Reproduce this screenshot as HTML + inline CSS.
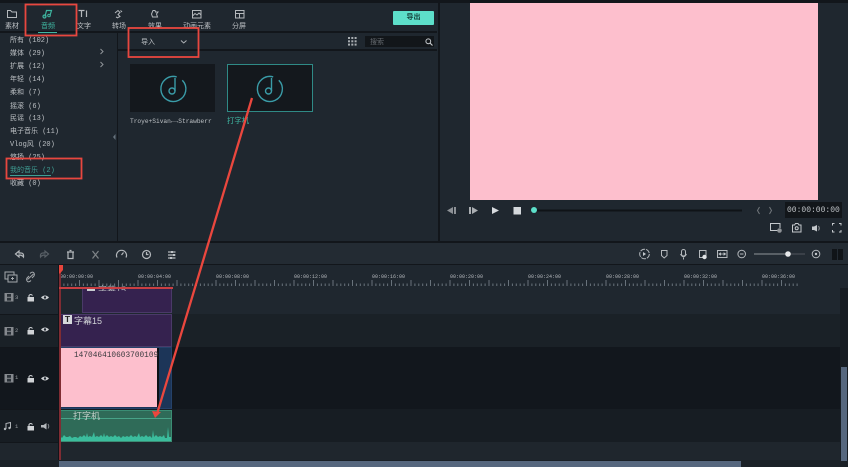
<!DOCTYPE html>
<html><head><meta charset="utf-8"><style>
html,body{margin:0;padding:0;background:#1f272f}
#p{position:relative;width:848px;height:467px;overflow:hidden;background:#1f272f;font-family:"Liberation Mono","Noto Sans CJK SC",monospace;color:#c4c8cc;font-size:7px}
#p div,#p span{position:absolute;white-space:nowrap;line-height:10px}
.b{background:#12161b}
.n{left:10px;font-size:7px;color:#bcc0c4;margin-top:1.500px}
.r{font-family:"Liberation Mono",monospace;font-size:5px;color:#b4b8bc;margin-top:1px}
svg{position:absolute;overflow:visible}
.i{fill:none;stroke:#b4b8bc;stroke-width:1}
.h{top:21px;color:#bcc0c4;font-size:7px;margin-top:1px}
</style></head><body><div id="p">

<!-- structural -->
<div class="b" style="left:0;top:0;width:848px;height:3px"></div>
<div class="b" style="left:0;top:31px;width:437px;height:2px"></div>
<div class="b" style="left:118px;top:49px;width:319px;height:2px"></div>
<div class="b" style="left:117px;top:33px;width:1px;height:208px"></div>
<div class="b" style="left:438px;top:0;width:2px;height:241px"></div>
<div class="b" style="left:0;top:241px;width:848px;height:2px"></div>
<div style="left:470px;top:3px;width:348px;height:197px;background:#fdbfcd"></div>

<!-- top tabs -->
<svg style="left:0;top:0" width="260" height="32" viewBox="0 0 260 32">
<path class="i" d="M7.500 10.500V17.500H16.500V12H12L10.500 10.500Z"/>
<path d="M45 16.500L46.500 10.500L51.500 10.500L50 15.500" fill="none" stroke="#3eb5a0" stroke-width="1.200"/>
<circle cx="44.500" cy="16.500" r="1.500" fill="none" stroke="#3eb5a0" stroke-width="1.200"/>
<circle cx="49" cy="15.500" r="1.300" fill="none" stroke="#3eb5a0" stroke-width="1"/>
<path class="i" d="M78.500 10.500H84.500M81.500 10.500V17M86.500 10.500V17" style="stroke-width:1.200"/>
<path class="i" d="M115 13L118 10.500L120 12.500L118 14.500L120 16.500L118 17.500M122 12L120.500 10.500M116 17L118 18"/>
<path class="i" d="M153 10.500L155 10.500L155.500 12H158L156.500 14L157.500 17H152.500L151.500 14Z"/>
<rect class="i" x="192.500" y="10.500" width="8.500" height="7.500"/>
<path class="i" d="M192.500 16L195 13.500L197 15L199 13L201 15"/>
<rect class="i" x="235.500" y="10.500" width="8.500" height="7.500"/>
<path class="i" d="M235.500 13.500H244M239.500 13.500V18"/>
</svg>
<div class="h" style="left:5px">素材</div>
<div class="h" style="left:41px;color:#3fb8a3">音频</div>
<div style="left:38px;top:31.500px;width:19px;height:1px;background:#3fb8a3"></div>
<div class="h" style="left:77px">文字</div>
<div class="h" style="left:112px">转场</div>
<div class="h" style="left:148px">效果</div>
<div class="h" style="left:183px">动画元素</div>
<div class="h" style="left:232px">分屏</div>

<div style="left:393px;top:11px;width:41px;height:14px;background:#5ddfca;border-radius:1px;color:#17453f;text-align:center;line-height:15px;font-weight:bold;font-size:7px">导出</div>

<!-- sidebar -->
<div class="n" style="top:34px">所有 (102)</div>
<div class="n" style="top:47px">媒体 (29)</div>
<div class="n" style="top:60px">扩展 (12)</div>
<div class="n" style="top:73px">年轻 (14)</div>
<div class="n" style="top:86px">柔和 (7)</div>
<div class="n" style="top:100px">摇滚 (6)</div>
<div class="n" style="top:112px">民谣 (13)</div>
<div class="n" style="top:125px">电子音乐 (11)</div>
<div class="n" style="top:138.500px">Vlog风 (20)</div>
<div class="n" style="top:151px">悠扬 (25)</div>
<div class="n" style="top:164px;color:#3f9f94">我的音乐 (2)</div>
<div style="left:10px;top:175px;width:41px;height:1px;background:#3f9f94"></div>
<div class="n" style="top:177px">收藏 (0)</div>
<svg style="left:0;top:0" width="120" height="180">
<path d="M100.500 49L103 51.500L100.500 54M100.500 62L103 64.500L100.500 67" fill="none" stroke="#8f9499"/>
<path d="M115.500 134L113 137L115.500 140Z" fill="#66727c"/>
</svg>

<!-- media toolbar -->
<div style="left:141px;top:38px;color:#bcc0c4">导入</div>
<svg style="left:180px;top:39px" width="8" height="6"><path d="M1 1.500L3.700 4L6.500 1.500" fill="none" stroke="#aeb2b6"/></svg>
<svg style="left:348px;top:37px" width="9" height="9">
<g fill="#a8adb1"><rect width="2" height="2"/><rect x="3.300" width="2" height="2"/><rect x="6.600" width="2" height="2"/><rect y="3.300" width="2" height="2"/><rect x="3.300" y="3.300" width="2" height="2"/><rect x="6.600" y="3.300" width="2" height="2"/><rect y="6.600" width="2" height="2"/><rect x="3.300" y="6.600" width="2" height="2"/><rect x="6.600" y="6.600" width="2" height="2"/></g>
</svg>
<div style="left:365px;top:36px;width:69px;height:11px;background:#12161a"></div>
<div style="left:370px;top:37.500px;color:#666b70">搜索</div>
<svg style="left:425px;top:38px" width="8" height="8"><circle cx="3.300" cy="3.300" r="2.400" fill="none" stroke="#c4c8cc"/><path d="M5 5L7.500 7.500" stroke="#c4c8cc" stroke-width="1.200"/></svg>

<!-- thumbnails -->
<div style="left:130px;top:64px;width:85px;height:48px;background:#14181d"></div>
<div style="left:227px;top:64px;width:84px;height:46px;background:#14181d;border:1px solid #2f8a86"></div>
<svg style="left:130px;top:60px" width="190" height="60">
<g fill="none" stroke="#3a9ca8" stroke-width="1.400">
<path d="M46.700 16.900A12.500 12.500 0 1 0 52.300 20.200"/>
<circle cx="42" cy="31" r="3"/>
<path d="M45 31V18"/>
</g>
<g fill="none" stroke="#3a9ca8" stroke-width="1.400" transform="translate(96.500 0)">
<path d="M46.700 16.900A12.500 12.500 0 1 0 52.300 20.200"/>
<circle cx="42" cy="31" r="3"/>
<path d="M45 31V18"/>
</g>
</svg>
<div style="left:130px;top:117px;font-family:'Liberation Mono',monospace;font-size:6.200px;color:#bcc0c4">Troye+Sivan←→Strawberr</div>
<div style="left:227px;top:116.500px;color:#3fb8a3;font-size:7.400px">打字机</div>

<!-- player -->
<svg style="left:440px;top:200px" width="408" height="42">
<g fill="#8d9196"><path d="M7 10.500L13 7V14Z"/><rect x="14" y="7" width="2" height="7"/></g>
<g fill="#aaaeb2"><rect x="29" y="7" width="2" height="7"/><path d="M32 7L38 10.500L32 14Z"/></g>
<path d="M52 7L59 10.500L52 14Z" fill="#d7dade"/>
<rect x="73.500" y="7" width="7.500" height="7.500" fill="#d4d8dc"/>
<rect x="95" y="9.500" width="207" height="2" fill="#0f1317"/>
<circle cx="94" cy="10" r="3" fill="#5ddfca"/>
<path d="M319.500 7L317.500 10.500L319.500 14M329.500 7L331.500 10.500L329.500 14" fill="none" stroke="#72777c"/>
<g fill="none" stroke="#c4c8cc">
<path d="M340.500 30.500H330.500V23.500H340V28"/>
<path d="M352.500 25H354.500L355.500 23.500H358L359 25H361V32H352.500Z"/>
<circle cx="356.700" cy="28.300" r="1.500"/>
<path d="M392.500 25.500V23.500H394.500M399 23.500H401V25.500M392.500 30V32H394.500M399 32H401V30"/>
</g>
<circle cx="339.500" cy="30.500" r="2.300" fill="#8f9397"/>
<path d="M372 26.500H374L377 25V31.500L374 30H372Z" fill="#c4c8cc"/>
<path d="M378.500 26Q380 28.200 378.500 30.500" fill="none" stroke="#8f9397"/>
</svg>
<div style="left:785px;top:202px;width:57px;height:16px;background:#12161a"></div>
<div style="left:787px;top:206px;font-family:'Liberation Mono',monospace;font-size:8px;color:#c0c4c8">00:00:00:00</div>

<!-- timeline toolbar -->
<div style="left:0;top:243px;width:848px;height:21px;background:#232b33"></div>
<div class="b" style="left:0;top:264px;width:848px;height:1px"></div>
<svg style="left:0;top:243px" width="848" height="22">
<g fill="none" stroke="#b4b8bc" stroke-width="1.200">
<path d="M15.500 11L19 8V10H21Q24 10 23.500 14Q22 12 19 12V14Z"/>
<path d="M48.500 11L45 8V10H43Q40 10 40.500 14Q42 12 45 12V14Z" stroke="#596067"/>
<path d="M67 9H74M68 9V15.500H73V9M69.500 7.500H71.500"/>
<path d="M92.500 8L98.500 15.500M98.500 8L92.500 15.500" stroke="#7f8488"/>
<path d="M117 14.500A5 5 0 1 1 126 14.500M121.500 12L123.500 9.500"/>
<circle cx="146.500" cy="11.500" r="4"/><path d="M146.500 9V11.500H148.500"/>
<path d="M168 9H175.500M168 12H175.500M168 15H175.500"/>
</g>
<g fill="#c0c4c8"><rect x="171" y="8" width="2" height="2"/><rect x="173" y="11" width="2" height="2"/><rect x="170" y="14" width="2" height="2"/></g>
<g fill="none" stroke="#b4b8bc">
<circle cx="644.500" cy="11" r="4.800" stroke-dasharray="5 1"/>
<path d="M661.500 7.500H667V12.500L664.200 15L661.500 12.500Z"/>
<rect x="681.500" y="6.500" width="4" height="6.500" rx="2"/><path d="M680.500 11Q683.500 16.500 686.500 11M683.500 14.500V16.500"/>
<rect x="699.500" y="7.500" width="6.500" height="7"/>
<rect x="717.500" y="7.500" width="9.500" height="7"/>
<circle cx="741.700" cy="11" r="3.800"/><path d="M740 11H743.500"/>
<circle cx="816" cy="11" r="3.800"/>
</g>
<path d="M646 11L643 9V13Z" fill="#c4c8cc"/>
<circle cx="704.500" cy="14" r="2.200" fill="#e0e3e6"/>
<path d="M720 11H724.500M719 11L720.500 10V12ZM725.500 11L724 10V12Z" stroke="#c4c8cc" fill="#c4c8cc" stroke-width=".8"/>
<circle cx="816" cy="11" r="1.200" fill="#c4c8cc"/>
<rect x="754" y="10.500" width="34" height="1" fill="#8f9499"/>
<rect x="788" y="10.500" width="17" height="1" fill="#50565d"/>
<circle cx="788" cy="11" r="2.800" fill="#e6e8ea"/>
<rect x="832" y="6" width="5" height="11" fill="#101418"/><rect x="838" y="6" width="5" height="11" fill="#101418"/>
</svg>

<!-- ruler -->
<div style="left:0;top:265px;width:848px;height:23px;background:#1f272f"></div>
<svg style="left:0;top:265px" width="848" height="25">
<defs><pattern id="tk" x="59.500" y="0" width="19.500" height="25" patternUnits="userSpaceOnUse">
<rect x="0" y="15" width="1" height="6" fill="#68727b"/>
<rect x="3.900" y="18.500" width="1" height="2.500" fill="#68727b"/><rect x="7.800" y="18.500" width="1" height="2.500" fill="#68727b"/><rect x="11.700" y="18.500" width="1" height="2.500" fill="#68727b"/><rect x="15.600" y="18.500" width="1" height="2.500" fill="#68727b"/>
</pattern></defs>
<rect x="59" y="0" width="740" height="25" fill="url(#tk)"/>
<g fill="none" stroke="#a4a8ac">
<rect x="5" y="7" width="9" height="7"/><rect x="8" y="10" width="9" height="7" fill="#1f272f"/><path d="M12.500 12V15M11 13.500H14"/>
<path d="M27.500 14.500L33.500 9M29 11L27 13Q26 15 27.500 16.500Q29 17.500 31 15.500M32 13L34 11Q35 9 33.500 7.500Q32 6.500 30 8.500"/>
</g>
</svg>
<div class="r" style="left:60px;top:271px">00:00:00:00</div>
<div class="r" style="left:138px;top:271px">00:00:04:00</div>
<div class="r" style="left:216px;top:271px">00:00:08:00</div>
<div class="r" style="left:294px;top:271px">00:00:12:00</div>
<div class="r" style="left:372px;top:271px">00:00:16:00</div>
<div class="r" style="left:450px;top:271px">00:00:20:00</div>
<div class="r" style="left:528px;top:271px">00:00:24:00</div>
<div class="r" style="left:606px;top:271px">00:00:28:00</div>
<div class="r" style="left:684px;top:271px">00:00:32:00</div>
<div class="r" style="left:762px;top:271px">00:00:36:00</div>

<!-- track backgrounds -->
<div style="left:0;top:288px;width:848px;height:26px;background:#1f272f"></div>
<div style="left:0;top:314px;width:848px;height:33px;background:#1a2127"></div>
<div style="left:0;top:347px;width:848px;height:62px;background:#12171d"></div>
<div style="left:0;top:409px;width:848px;height:33px;background:#171d23"></div>
<div style="left:0;top:442px;width:848px;height:18px;background:#1f262d"></div>
<div style="left:0;top:460px;width:848px;height:7px;background:#1a2026"></div>
<div style="left:840px;top:288px;width:8px;height:172px;background:#171d23"></div>
<div style="left:58px;top:265px;width:1px;height:195px;background:#10151a"></div>
<div style="left:0;top:314px;width:58px;height:1px;background:#12161b"></div>
<div style="left:0;top:347px;width:58px;height:1px;background:#12161b"></div>
<div style="left:0;top:409px;width:58px;height:1px;background:#12161b"></div>
<div style="left:0;top:442px;width:58px;height:1px;background:#12161b"></div>

<!-- track headers -->
<svg style="left:0;top:288px" width="58" height="150">
<defs><g id="fr"><rect width="9" height="8.500" fill="#85898e"/><rect x="2.500" y="1" width="4" height="2.800" fill="#2a3138"/><rect x="2.500" y="4.800" width="4" height="2.800" fill="#2a3138"/></g>
<g id="lk"><rect width="6.500" height="4.500" y="3" fill="#d0d3d6"/><path d="M1.500 3V1.500Q3.200 -.5 5 1.500" fill="none" stroke="#d0d3d6"/></g>
<g id="ey"><path d="M0 2.500Q4 -1.500 8 2.500Q4 6.500 0 2.500Z" fill="#d0d3d6"/><circle cx="4" cy="2.500" r="1.200" fill="#1f272f"/></g></defs>
<use href="#fr" x="4.500" y="5"/><use href="#lk" x="27.500" y="6"/><use href="#ey" x="41" y="7"/>
<use href="#fr" x="4.500" y="39"/><use href="#lk" x="27.500" y="39"/><use href="#ey" x="41" y="39"/>
<use href="#fr" x="4.500" y="86"/><use href="#lk" x="27.500" y="87"/><use href="#ey" x="41" y="88"/>
<path d="M6 141V135.500L10.500 134.500V140" fill="none" stroke="#b0b4b8"/><circle cx="5" cy="141" r="1.200" fill="#b0b4b8"/><circle cx="9.500" cy="140" r="1.200" fill="#b0b4b8"/>
<use href="#lk" x="27.500" y="135"/>
<path d="M41 137H43.500L46.500 135V141.500L43.500 139.500H41Z" fill="#b4b8bc"/><path d="M48 136Q49.500 138.200 48 140.500" fill="none" stroke="#80858a"/>
</svg>
<div style="left:15px;top:293px;font-size:5.500px;color:#9da1a5">3</div>
<div style="left:15px;top:326px;font-size:5.500px;color:#9da1a5">2</div>
<div style="left:15px;top:373px;font-size:5.500px;color:#9da1a5">1</div>
<div style="left:15px;top:422px;font-size:5.500px;color:#9da1a5">1</div>

<!-- clips -->
<div style="left:82px;top:288px;width:90px;height:25px;background:#35224f;border:solid #4a3a68;border-width:0 1px 1px 1px;box-sizing:border-box"></div>
<div style="left:87px;top:288px;width:8px;height:3px;background:#c8ccd0"></div>
<div style="left:98px;top:285px;font-size:9px;color:#aeb0b6;height:6px;overflow:hidden;font-family:'Liberation Sans','Noto Sans CJK SC',sans-serif">字幕15</div>
<div style="left:60px;top:314px;width:112px;height:33px;background:#35224f;border:1px solid #4a3a68;box-sizing:border-box"></div>
<div style="left:63px;top:315px;width:9px;height:9px;background:#d5d8dc;color:#222;font-weight:bold;text-align:center;line-height:9px;font-size:8.500px;font-family:'Liberation Sans',sans-serif">T</div>
<div style="left:74px;top:316px;font-size:9px;color:#d0d2d6;font-family:'Liberation Sans','Noto Sans CJK SC',sans-serif">字幕15</div>
<div style="left:60px;top:347px;width:112px;height:62px;background:#1c3558;border:1px solid #25426a;box-sizing:border-box"></div>
<div style="left:61px;top:348px;width:96px;height:59px;background:#fdbfcd"></div>
<div style="left:157px;top:348px;width:2px;height:59px;background:#0d1015"></div>
<div style="left:74px;top:351px;font-family:'Liberation Mono',monospace;font-size:7.800px;color:#3b3b3f;width:85px;overflow:hidden">147046410603700109</div>
<div style="left:59px;top:410px;width:113px;height:32px;background:#2f6b58;border:1px solid #3b8d74;box-sizing:border-box"></div>
<div style="left:60px;top:418px;width:111px;height:1px;background:#48a388"></div>
<div style="left:73px;top:412px;font-size:9px;color:#c6d2cc">打字机</div>
<svg style="left:59px;top:410px" width="113" height="32"><path fill="#3bbd9d" d="M1 31V26L3 28L5 25L7 27L9 27L11 26L13 28L15 27L17 27L19 28L21 26L23 27L25 25L27 27L28 23L29 27L31 26L33 27L35 22L36 27L38 26L40 27L42 25L44 27L45 23L46 27L48 25L50 27L52 26L54 27L56 25L58 27L60 26L62 28L64 26L66 27L68 26L70 27L72 25L74 27L76 26L78 27L80 23L81 27L83 26L85 27L87 25L89 27L91 26L93 28L94 20L95 27L97 25L99 27L101 26L103 27L105 25L106 28L108 28L109 17L110 27L112 27V31Z"/></svg>

<!-- playhead -->
<div style="left:59px;top:272px;width:1.500px;height:188px;background:#7f2c33"></div>
<div style="left:59px;top:287px;width:114px;height:2px;background:#c93f42"></div>
<svg style="left:59px;top:265px" width="6" height="9"><path d="M0 0H4V5L1 8.500H0Z" fill="#e8453c"/></svg>

<!-- scrollbars -->
<div style="left:59px;top:461px;width:682px;height:6px;background:#56677e"></div>
<div style="left:841px;top:367px;width:6px;height:94px;background:#56677e"></div>

<!-- annotation -->
<svg style="left:0;top:0" width="848" height="467">
<g fill="none" stroke="#e8473f" stroke-width="1.800">
<rect x="25.500" y="4.500" width="51" height="31"/>
<rect x="128.500" y="28" width="70" height="29"/>
<rect x="6.500" y="158.500" width="75" height="20"/>
</g>
<path d="M252 98L157 414" stroke="#ea473e" stroke-width="2.300" fill="none"/>
<path d="M155 418L152 411L161 412Z" fill="#ea473e"/>
</svg>
</div></body></html>
